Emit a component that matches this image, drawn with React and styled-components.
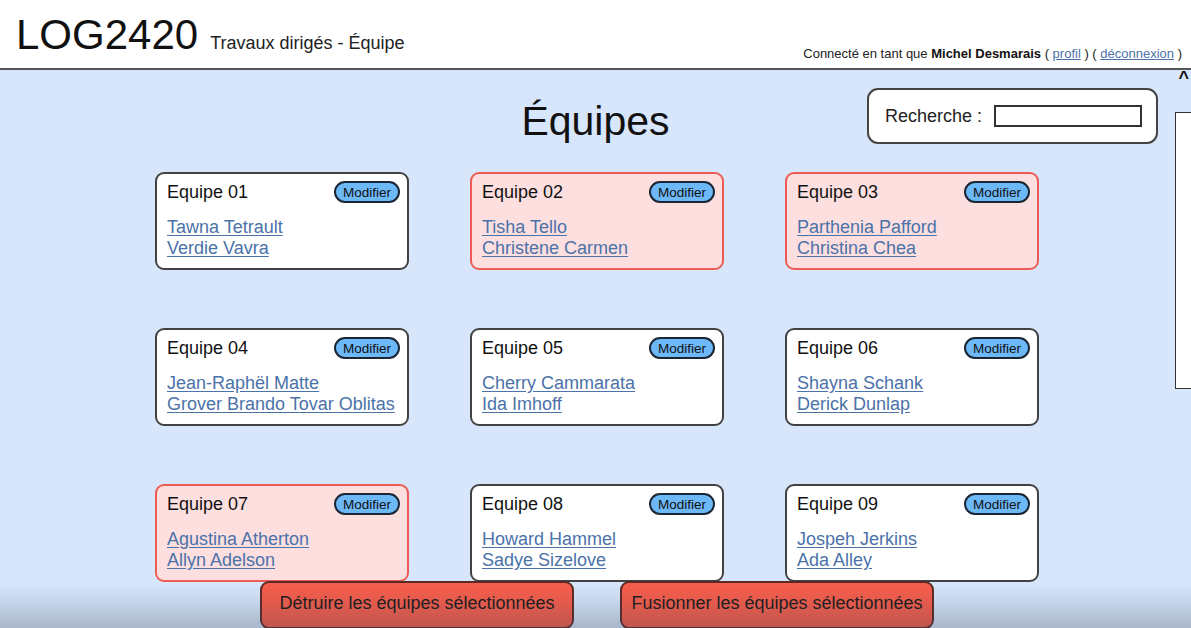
import React from "react";
import styled, { createGlobalStyle } from "styled-components";

const Global = createGlobalStyle`
  html, body { margin: 0; padding: 0; }
  body {
    width: 1191px;
    height: 628px;
    overflow: hidden;
    font-family: "Liberation Sans", Arial, sans-serif;
    color: #111;
    background: #d7e6fb;
  }
  * { box-sizing: border-box; }
`;

const Page = styled.div`
  position: relative;
  width: 1191px;
  height: 628px;
  overflow: hidden;
  background: #d7e6fb;
`;

const Header = styled.header`
  display: flex;
  justify-content: space-between;
  align-items: flex-end;
  height: 70px;
  padding: 0 9px 0 16px;
  background: #fff;
  border-bottom: 2px solid #555;
`;

const Brand = styled.div`
  display: flex;
  align-items: baseline;
  gap: 12px;
  padding-bottom: 12px;
`;

const Logo = styled.h1`
  margin: 0;
  font-size: 42px;
  line-height: 1;
  font-weight: 400;
  color: #111;
`;

const Subtitle = styled.span`
  font-size: 18px;
  color: #222;
`;

const UserInfo = styled.div`
  font-size: 13px;
  line-height: 15px;
  padding-bottom: 7px;
  color: #222;
  b { font-weight: 700; color: #111; }
  a { color: #4b72a9; text-decoration: underline; }
`;

const Main = styled.main`
  display: flex;
  flex-direction: column;
`;

const TitleRow = styled.div`
  display: grid;
  grid-template-columns: 1fr auto 1fr;
  align-items: start;
  height: 56px;
  margin-top: 18px;
`;

const Title = styled.h2`
  grid-column: 2;
  margin: 11px 0 0;
  font-size: 41px;
  line-height: 45px;
  font-weight: 400;
  color: #111;
`;

const SearchBox = styled.div`
  grid-column: 3;
  justify-self: end;
  margin-right: 33px;
  display: flex;
  align-items: center;
  gap: 12px;
  width: 291px;
  height: 56px;
  padding-left: 16px;
  background: #fff;
  border: 2px solid #444;
  border-radius: 11px;
  font-size: 18px;
  color: #222;
`;

const SearchInput = styled.input`
  width: 148px;
  height: 22px;
  border: 2px solid #333;
  background: #fff;
  padding: 0 4px;
  font: inherit;
  outline: none;
`;

const Grid = styled.div`
  display: grid;
  grid-template-columns: repeat(3, 254px);
  grid-auto-rows: 98px;
  column-gap: 61px;
  row-gap: 58px;
  justify-content: center;
  margin-top: 28px;
  padding-left: 3px;
`;

const Card = styled.div`
  display: flex;
  flex-direction: column;
  gap: 14px;
  padding: 7px 7px 0 10px;
  border-radius: 9px;
  border: 2px solid ${(p) => (p.$selected ? "#ee5b55" : "#424242")};
  background: ${(p) => (p.$selected ? "#fddfdf" : "#fff")};
`;

const CardHead = styled.div`
  display: flex;
  justify-content: space-between;
  align-items: center;
  height: 22px;
`;

const CardTitle = styled.span`
  font-size: 18px;
  line-height: 21px;
  color: #111;
`;

const ModifyButton = styled.button`
  height: 22px;
  padding: 0 7px;
  border-radius: 11px;
  border: 2px solid #1b2634;
  background: #6db8f7;
  font-family: "Liberation Sans", Arial, sans-serif;
  font-size: 13.5px;
  color: #111;
  cursor: pointer;
`;

const Members = styled.div`
  display: flex;
  flex-direction: column;
  align-items: flex-start;
`;

const Member = styled.a`
  font-size: 18px;
  line-height: 21px;
  color: #4b72a9;
  text-decoration: underline;
  text-underline-offset: 2px;
`;

const Actions = styled.div`
  display: flex;
  justify-content: center;
  gap: 46px;
  margin-top: -1px;
  padding-left: 3px;
  position: relative;
  z-index: 1;
`;

const DangerButton = styled.button`
  width: 314px;
  height: 48px;
  padding-bottom: 4px;
  border-radius: 9px;
  border: 2px solid #5b2a26;
  background: #f75d4b;
  font-family: "Liberation Sans", Arial, sans-serif;
  font-size: 18px;
  color: #1a1a1a;
  cursor: pointer;
`;

const SideCaret = styled.span`
  position: absolute;
  top: 68px;
  right: 2px;
  font-size: 18px;
  font-weight: 700;
  color: #111;
`;

const SidePanel = styled.div`
  position: absolute;
  top: 112px;
  left: 1175px;
  width: 30px;
  height: 277px;
  background: #fff;
  border: 1.5px solid #333;
`;

const BottomShade = styled.div`
  position: absolute;
  left: 0;
  right: 0;
  bottom: 0;
  height: 44px;
  pointer-events: none;
  z-index: 2;
  background: linear-gradient(
    to bottom,
    rgba(60, 70, 90, 0) 0%,
    rgba(60, 70, 90, 0.1) 40%,
    rgba(60, 70, 90, 0.3) 100%
  );
`;

const teams = [
  { id: "01", members: ["Tawna Tetrault", "Verdie Vavra"] },
  { id: "02", members: ["Tisha Tello", "Christene Carmen"], selected: true },
  { id: "03", members: ["Parthenia Pafford", "Christina Chea"], selected: true },
  { id: "04", members: ["Jean-Raphël Matte", "Grover Brando Tovar Oblitas"] },
  { id: "05", members: ["Cherry Cammarata", "Ida Imhoff"] },
  { id: "06", members: ["Shayna Schank", "Derick Dunlap"] },
  { id: "07", members: ["Agustina Atherton", "Allyn Adelson"], selected: true },
  { id: "08", members: ["Howard Hammel", "Sadye Sizelove"] },
  { id: "09", members: ["Jospeh Jerkins", "Ada Alley"] },
];

export default function App() {
  return (
    <Page>
      <Global />
      <Header>
        <Brand>
          <Logo>LOG2420</Logo>
          <Subtitle>Travaux dirigés - Équipe</Subtitle>
        </Brand>
        <UserInfo>
          Connecté en tant que <b>Michel Desmarais</b> ( <a href="#">profil</a> ) ({" "}
          <a href="#">déconnexion</a> )
        </UserInfo>
      </Header>
      <Main>
        <TitleRow>
          <Title>Équipes</Title>
          <SearchBox>
            <span>Recherche :</span>
            <SearchInput type="text" />
          </SearchBox>
        </TitleRow>
        <Grid>
          {teams.map((t) => (
            <Card key={t.id} $selected={t.selected}>
              <CardHead>
                <CardTitle>Equipe {t.id}</CardTitle>
                <ModifyButton>Modifier</ModifyButton>
              </CardHead>
              <Members>
                {t.members.map((m) => (
                  <Member key={m} href="#">
                    {m}
                  </Member>
                ))}
              </Members>
            </Card>
          ))}
        </Grid>
        <Actions>
          <DangerButton>Détruire les équipes sélectionnées</DangerButton>
          <DangerButton>Fusionner les équipes sélectionnées</DangerButton>
        </Actions>
      </Main>
      <SideCaret>^</SideCaret>
      <SidePanel />
      <BottomShade />
    </Page>
  );
}
